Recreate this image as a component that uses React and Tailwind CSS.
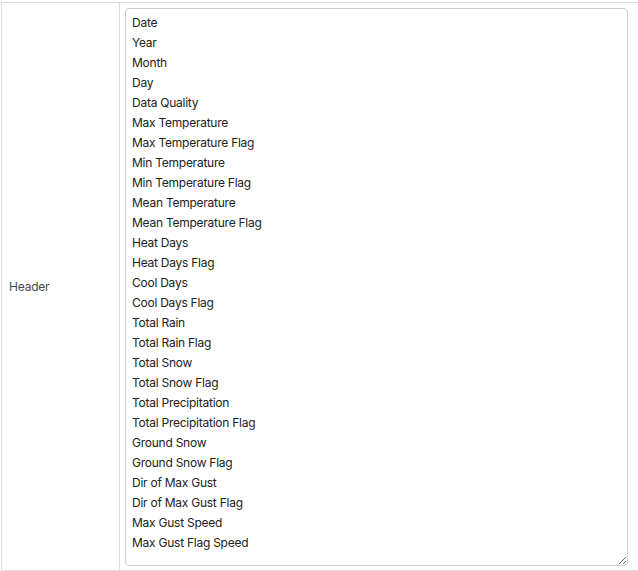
const items = [
  "Date","Year","Month","Day","Data Quality","Max Temperature","Max Temperature Flag","Min Temperature","Min Temperature Flag","Mean Temperature","Mean Temperature Flag","Heat Days","Heat Days Flag","Cool Days","Cool Days Flag","Total Rain","Total Rain Flag","Total Snow","Total Snow Flag","Total Precipitation","Total Precipitation Flag","Ground Snow","Ground Snow Flag","Dir of Max Gust","Dir of Max Gust Flag","Max Gust Speed","Max Gust Flag Speed"
];

export default function App() {
  return (
    <div className="bg-white w-[638px] h-[571px] overflow-hidden" style={{ fontFamily: "Inter, 'Noto Sans', sans-serif" }}>
      <div className="mt-[2px] ml-[1px] w-[660px] flex border border-[#dddddd]">
        <div className="w-[118px] border-r border-[#dddddd] flex items-center px-[7px] text-[12px] text-[#4a4a4a] tracking-[-0.2px]">
          Header
        </div>
        <div className="flex-1 pl-[5px] pt-[5px] pb-[4px]">
          <textarea
            readOnly
            defaultValue={items.join("\n")}
            className="block w-[503px] h-[558px] border border-[#cfcfcf] rounded-[4px] pl-[6px] pt-[4px] text-[12px] leading-[20px] tracking-[-0.25px] text-[#222222] outline-none resize-y overflow-hidden"
            style={{ fontFamily: "Inter, 'Noto Sans', sans-serif" }}
          />
        </div>
      </div>
    </div>
  );
}
